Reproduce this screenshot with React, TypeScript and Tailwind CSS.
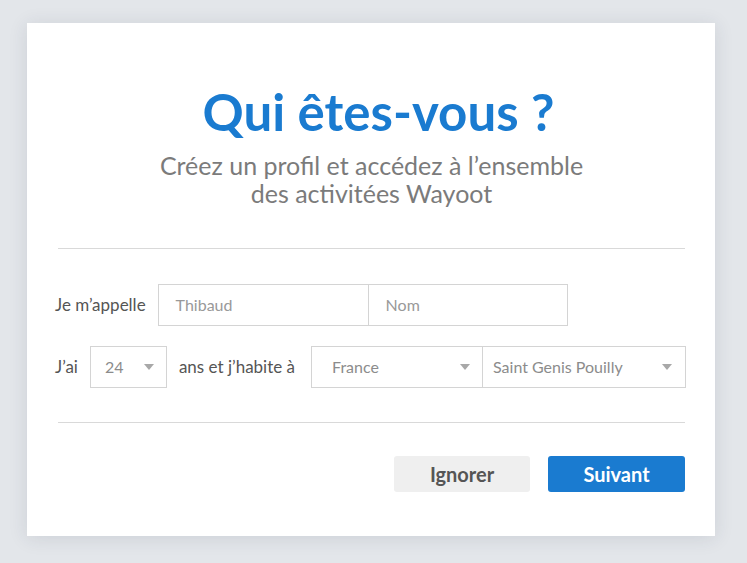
import React from "react";

function Caret() {
  return (
    <svg width="10" height="6" viewBox="0 0 10 6" className="shrink-0">
      <path d="M0 0h10L5 6z" fill="#a8a8a8" />
    </svg>
  );
}

function Select({
  value,
  className,
  pad,
}: {
  value: string;
  className: string;
  pad: string;
}) {
  return (
    <div
      className={`h-[42px] shrink-0 flex items-center justify-between border border-[#d4d4d4] bg-white text-[16px] text-[#8c8c8c] whitespace-nowrap ${className} ${pad}`}
    >
      <span>{value}</span>
      <Caret />
    </div>
  );
}

export default function App() {
  return (
    <div
      className="min-h-screen w-full bg-[#e3e6ea] pt-[23px] pl-[27px]"
      style={{ fontFamily: "Lato, 'Open Sans', sans-serif" }}
    >
      <div className="w-[688px] h-[513px] bg-white shadow-[0_2px_18px_rgba(40,50,70,0.12)] pt-[59px] pl-[31px] pr-[30px]">
        <h1 className="text-center text-[51px] leading-[60px] font-bold text-[#1a7bd0] pl-[14px]">
          Qui êtes-vous ?
        </h1>
        <p className="mt-[9px] text-center text-[25px] leading-[28px] text-[#7b7b7b]">
          Créez un profil et accédez à l’ensemble
          <br />
          des activitées Wayoot
        </p>
        <div className="mt-[41px] h-px bg-[#d9d9d9]" />

        <div className="mt-[35px] flex items-center">
          <span className="-ml-[3px] mr-[12px] shrink-0 whitespace-nowrap text-[17px] text-[#555]">
            Je m’appelle
          </span>
          <div className="w-[211px] h-[42px] shrink-0 flex items-center border border-[#d4d4d4] pl-[17px] text-[16px] text-[#999]">
            Thibaud
          </div>
          <div className="w-[200px] h-[42px] shrink-0 -ml-px flex items-center border border-[#d4d4d4] pl-[17px] text-[16px] text-[#999]">
            Nom
          </div>
        </div>

        <div className="mt-[20px] flex items-center">
          <span className="-ml-[3px] mr-[12px] shrink-0 whitespace-nowrap text-[17px] text-[#555]">
            J’ai
          </span>
          <Select value="24" className="w-[77px]" pad="pl-[14px] pr-[12px]" />
          <span className="ml-[12px] mr-[16px] shrink-0 whitespace-nowrap text-[17px] text-[#555]">
            ans et j’habite à
          </span>
          <Select value="France" className="w-[172px]" pad="pl-[20px] pr-[12px]" />
          <Select
            value="Saint Genis Pouilly"
            className="w-[204px] -ml-px"
            pad="pl-[10px] pr-[13px]"
          />
        </div>

        <div className="mt-[34px] h-px bg-[#d9d9d9]" />

        <div className="mt-[33px] flex justify-end gap-[18px]">
          <button className="w-[136px] h-[36px] rounded-[3px] bg-[#efefef] text-[20px] font-bold text-[#555]">
            Ignorer
          </button>
          <button className="w-[137px] h-[36px] rounded-[3px] bg-[#1a7bd0] text-[20px] font-bold text-white">
            Suivant
          </button>
        </div>
      </div>
    </div>
  );
}
